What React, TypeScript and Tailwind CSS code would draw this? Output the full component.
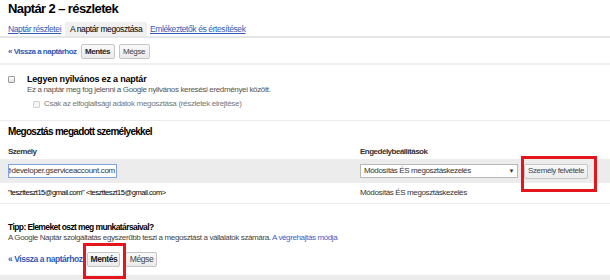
import React from 'react';

const Btn: React.FC<{ label: string; bold?: boolean; w: string; size?: string }> = ({ label, bold, w, size }) => (
  <button
    className={`${w} ${size ?? 'h-[15px] text-[8px]'} rounded-[2px] border border-[#c6c6c6] bg-linear-to-b from-[#f9f9f9] to-[#ebebeb] tracking-[-0.4px] leading-none whitespace-nowrap ${
      bold ? 'font-bold text-[#222]' : 'text-[#444]'
    }`}
  >
    {label}
  </button>
);

const Box: React.FC<{ light?: boolean }> = ({ light }) => (
  <span
    className={`inline-block w-[7px] h-[7px] rounded-[1px] border ${
      light ? 'border-[#d0d0d0] bg-[#f6f6f6]' : 'border-[#9a9a9a] bg-linear-to-b from-white to-[#e2e2e2]'
    }`}
  />
);

const App: React.FC = () => {
  return (
    <div className="relative w-[610px] h-[280px] overflow-hidden bg-white text-[#222] font-['Liberation_Sans',Arial,sans-serif]">
      {/* Title */}
      <div className="h-[20px] pl-2 text-[13px] tracking-[-0.6px] leading-[17px] font-bold text-black">Naptár 2 – részletek</div>

      {/* Tabs */}
      <div className="h-[16px] pl-2 flex items-end text-[8.5px] tracking-[-0.4px]">
        <a className="w-[57px] h-[14px] leading-[14px] text-[#2f5bb7] underline whitespace-nowrap">Naptár részletei</a>
        <span className="w-[82px] h-[14px] leading-[14px] px-[5px] bg-[#f0f0f0] text-black whitespace-nowrap">A naptár megosztása</span>
        <a className="h-[14px] leading-[14px] ml-[3px] text-[#2f5bb7] underline whitespace-nowrap">Emlékeztetők és értesítések</a>
      </div>
      <div className="h-[2px] bg-[#e6e6e6]" />

      {/* Top actions */}
      <div className="h-[25px] pl-2 pt-[6px] flex items-start gap-[4px]">
        <a className="h-[15px] leading-[15px] text-[8px] tracking-[-0.5px] font-bold text-[#2f5bb7] whitespace-nowrap">« Vissza a naptárhoz</a>
        <Btn label="Mentés" bold w="w-[34px]" />
        <Btn label="Mégse" w="w-[31px]" />
      </div>
      <div className="h-[2px] bg-[#f0f0f0]" />

      {/* Public calendar */}
      <div className="h-[55px] pt-[9px] pl-2">
        <div className="flex items-center h-[11px] leading-[11px]">
          <Box />
          <span className="ml-[12px] text-[9px] tracking-[-0.2px] font-bold text-black">Legyen nyilvános ez a naptár</span>
        </div>
        <div className="pl-[19px] h-[10px] text-[8px] tracking-[-0.35px] leading-[10px] text-[#555]">
          Ez a naptár meg fog jelenni a Google nyilvános keresési eredményei között.
        </div>
        <div className="mt-[4px] pl-[25px] flex items-center h-[10px] leading-[10px]">
          <Box light />
          <span className="ml-[4px] text-[8px] tracking-[-0.32px] text-[#777]">
            Csak az elfoglaltsági adatok megosztása (részletek elrejtése)
          </span>
        </div>
      </div>
      <div className="h-px bg-[#ebebeb]" />

      {/* Sharing with people */}
      <div className="h-[26px] pt-[4px] pl-2 text-[10px] tracking-[-0.7px] leading-[14px] font-bold text-black">
        Megosztás megadott személyekkel
      </div>
      <div className="h-[12px] grid grid-cols-[352px_1fr] pl-2 text-[8px] tracking-[-0.5px] leading-[10px] font-bold text-[#333]">
        <span>Személy</span>
        <span>Engedélybeállítások</span>
      </div>

      <div className="h-[24px] bg-[#ececec] grid grid-cols-[352px_1fr] items-center pl-2">
        <div className="w-[109px] h-[14px] border border-[#7fa3e3] bg-white flex justify-end items-center overflow-hidden pr-[1px]">
          <span className="whitespace-nowrap text-[8px] tracking-[-0.3px] text-[#333]">m@developer.gserviceaccount.com</span>
        </div>
        <div className="flex items-center gap-[6px]">
          <div className="w-[158px] h-[14px] border border-[#b8b8b8] bg-white flex items-center justify-between pl-[3px] pr-[3px] text-[8px] tracking-[-0.38px] text-[#333]">
            <span>Módosítás ÉS megosztáskezelés</span>
            <span className="text-[6px]">▼</span>
          </div>
          <Btn label="Személy felvétele" w="w-[64px]" />
        </div>
      </div>

      <div className="h-[20px] grid grid-cols-[352px_1fr] items-center pl-2">
        <span className="text-[7.5px] tracking-[-0.45px] text-black whitespace-nowrap">"tesztteszt15@gmail.com" &lt;tesztteszt15@gmail.com&gt;</span>
        <span className="text-[8px] tracking-[-0.38px] text-[#333]">Módosítás ÉS megosztáskezelés</span>
      </div>
      <div className="h-px bg-[#ececec]" />

      {/* Tip */}
      <div className="h-[42px] pt-[17px] pl-2">
        <div className="text-[8.5px] tracking-[-0.6px] leading-[12px] font-bold text-black">Tipp: Elemeket oszt meg munkatársaival?</div>
        <div className="text-[8px] tracking-[-0.38px] leading-[10px] text-[#444]">
          A Google Naptár szolgáltatás egyszerűbb teszi a megosztást a vállalatok számára.{' '}
          <a className="text-[#3b62c9]">A végrehajtás módja</a>
        </div>
      </div>

      {/* Bottom actions */}
      <div className="h-[29px] pl-2 pt-[6px] flex items-start gap-[5px]">
        <a className="h-[15px] leading-[15px] text-[8.5px] tracking-[-0.45px] font-bold text-[#2f5bb7] whitespace-nowrap">« Vissza a naptárhoz</a>
        <Btn label="Mentés" bold w="w-[33px]" size="h-[15px] text-[8.5px]" />
        <Btn label="Mégse" w="w-[32px]" size="h-[15px] text-[8.5px]" />
      </div>
      <div className="h-[8px] bg-[#ececec]" />

      {/* Highlights */}
      <div className="absolute left-[521px] top-[156px] w-[76px] h-[36px] border-[3px] border-[#e3151d]" />
      <div className="absolute left-[83px] top-[243px] w-[43px] h-[36px] border-[3px] border-[#e3151d]" />
    </div>
  );
};

export default App;
